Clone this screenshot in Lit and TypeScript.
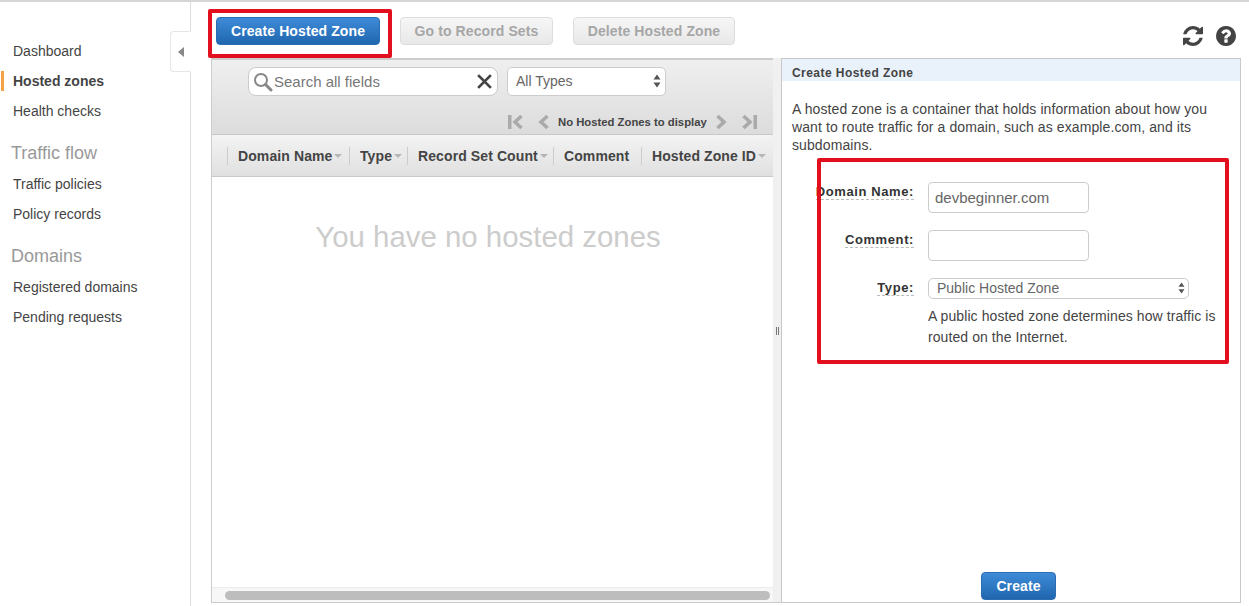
import { LitElement, html, css } from "lit";
import { customElement } from "lit/decorators.js";

const updown = html`<svg class="updown" viewBox="0 0 8 14"><path d="M4 0.500 7.500 5.500H0.500Z M4 13.500 0.500 8.500H7.500Z" fill="#555"/></svg>`;

@customElement("app-root")
export class AppRoot extends LitElement {
  static styles = css`
    :host { display: block; width: 1249px; height: 606px; overflow: hidden; position: relative; background: #fff; color: #444; font-family: "Liberation Sans", Arial, sans-serif; font-size: 14px; }
    * { box-sizing: border-box; }
    .page { display: grid; grid-template-columns: 191px 1fr; height: 606px; border-top: 2px solid #d5d5d5; }
    .side { border-right: 1px solid #ddd; padding-top: 34px; position: relative; }
    .item { height: 30px; line-height: 30px; padding-left: 13px; color: #444; white-space: nowrap; }
    .item.active { font-weight: bold; position: relative; }
    .item.active::before { content: ""; position: absolute; left: 1px; top: 5px; width: 3px; height: 20px; background: #f7a145; }
    .head { height: 28px; line-height: 28px; margin: 13px 0 2px; padding-left: 11px; font-size: 18px; color: #999; }
    .tab { position: absolute; right: -1px; top: 29px; width: 21px; height: 41px; background: #fff; border: 1px solid #e6e6e6; border-right: 1px solid #fff; border-radius: 4px 0 0 4px; display: flex; align-items: center; justify-content: center; }
    .tab i { display: block; width: 0; height: 0; border-style: solid; border-width: 5.500px 6px 5.500px 0; border-color: transparent #888 transparent transparent; margin-left: 1px; }
    .main { display: flex; flex-direction: column; min-width: 0; }
    .bar { height: 56px; flex: none; display: flex; align-items: flex-start; gap: 20px; padding: 15px 13px 0 25px; }
    .btn { height: 28px; border-radius: 4px; font-weight: bold; font-size: 14px; letter-spacing: 0.1px; display: flex; align-items: center; justify-content: center; white-space: nowrap; }
    .btn.primary { color: #fff; background: linear-gradient(#3f8bd8, #1f66ae); border: 1px solid #2a6db3; }
    .btn.off { color: #a6a6a6; background: linear-gradient(#f6f6f6, #e8e8e8); border: 1px solid #ddd; }
    .w1 { width: 164px; } .w2 { width: 153px; } .w3 { width: 162px; }
    .tools { margin-left: auto; display: flex; gap: 13px; padding-top: 9px; }
    .tools svg { width: 20px; height: 20px; display: block; fill: #444; }
    .panes { flex: 1; min-height: 0; display: grid; grid-template-columns: 562px 8px 460px; margin: 0 8px 3px 20px; }
    .left { border: 1px solid #ccc; border-top: 2px solid #ccc; border-right: none; display: flex; flex-direction: column; min-height: 0; }
    .filter { height: 75px; flex: none; background: linear-gradient(#efefef, #dcdcdc); padding: 7px 0 0 36px; border-bottom: 1px solid #c9c9c9; position: relative; }
    .filters { display: flex; gap: 9px; }
    .search { width: 250px; height: 29px; background: #fff; border: 1px solid #ccc; border-radius: 8px; display: flex; align-items: center; padding: 0 4px 0 4px; color: #777; font-size: 15px; }
    .search .lens { width: 20px; height: 20px; margin-right: 1px; flex: none; }
    .search .x { width: 17px; height: 17px; margin-left: auto; flex: none; }
    .search span { white-space: nowrap; }
    .typesel { width: 159px; height: 29px; background: #fff; border: 1px solid #ccc; border-radius: 5px; display: flex; align-items: center; justify-content: space-between; padding: 0 4px 1px 8px; color: #666; font-size: 14px; }
    .updown { width: 8px; height: 14px; display: block; flex: none; }
    .pager { display: flex; align-items: center; height: 16px; margin-top: 18px; margin-left: 260px; position: relative; }
    .pager svg { display: block; flex: none; height: 16px; }
    .pager .chev { fill: none; stroke: #aaa; stroke-width: 3.600; }
    .pager .gap { margin-left: 15px; }
    .pager .t { font-size: 11.300px; font-weight: bold; color: #444; white-space: nowrap; margin: 0 9px; }
    .cols { height: 42px; flex: none; background: linear-gradient(#f3f3f3, #e0e0e0); border-bottom: 1px solid #c9c9c9; display: flex; align-items: center; padding-left: 15px; font-weight: bold; letter-spacing: 0.1px; color: #444; font-size: 14px; white-space: nowrap; }
    .col { height: 18px; line-height: 18px; border-left: 1px solid #ccc; padding-left: 10px; display: flex; align-items: center; }
    .caret { display: block; width: 0; height: 0; margin: 1px 0 0 2px; border-style: solid; border-width: 4px 4px 0 4px; border-color: #b5b5b5 transparent transparent transparent; }
    .c1 { width: 122px; } .c2 { width: 58px; } .c3 { width: 146px; } .c4 { width: 88px; } .c5 { width: 120px; }
    .empty { flex: 1; min-height: 0; text-align: center; color: #ccc; font-size: 29.400px; padding: 43px 9px 0 0; white-space: nowrap; }
    .track { height: 15px; flex: none; background: #f7f7f7; border-top: 1px solid #ececec; padding: 3px 3px 0 13px; }
    .thumb { height: 9px; background: #bdbdbd; border-radius: 5px; }
    .split { background: #f0f0f0; border-bottom: 1px solid #ccc; display: flex; align-items: center; justify-content: center; }
    .split i { display: block; width: 3px; height: 8px; border-left: 1px solid #777; border-right: 1px solid #777; margin-top: 1px; }
    .right { border: 1px solid #c8c8c8; display: flex; flex-direction: column; min-height: 0; }
    .title { height: 22px; padding: 4px 0 0 10px; line-height: 21px; flex: none; background: #e9f1fb; font-size: 12px; font-weight: bold; letter-spacing: 0.450px; color: #444; white-space: nowrap; overflow: hidden; }
    .intro { margin: 0; padding: 19px 10px 0 10px; line-height: 18px; letter-spacing: 0.100px; color: #444; }
    .form { display: grid; grid-template-columns: 132px 1fr; column-gap: 14px; margin-top: 28px; flex: 1; align-content: start; }
    .lab { justify-self: end; height: 16px; line-height: 15px; font-size: 13px; font-weight: bold; letter-spacing: 0.600px; color: #333; border-bottom: 1px dashed #bbb; margin-top: 2px; white-space: nowrap; }
    .inp { width: 161px; height: 31px; border: 1px solid #ccc; border-radius: 4px; padding-left: 6px; line-height: 30px; color: #666; margin-bottom: 17px; font-size: 15px; }
    .sel { width: 261px; height: 21px; border: 1px solid #ccc; border-radius: 5px; padding: 0 3px 1px 8px; color: #666; display: flex; align-items: center; justify-content: space-between; }
    .sel .updown { width: 7px; height: 12px; }
    .help { grid-column: 2; line-height: 21px; margin-top: 7px; letter-spacing: 0.080px; color: #444; }
    .foot { flex: none; display: flex; justify-content: center; padding: 0 0 2px 15px; }
    .btn.go { width: 75px; }
    .mark { position: absolute; border: 4px solid #e2101f; border-radius: 2px; pointer-events: none; }
    .m1 { left: 208px; top: 9px; width: 184px; height: 49px; }
    .m2 { left: 817px; top: 158px; width: 412px; height: 206px; }
  `;

  render() {
    return html`
      <div class="page">
        <nav class="side">
          <div class="item">Dashboard</div>
          <div class="item active">Hosted zones</div>
          <div class="item">Health checks</div>
          <div class="head">Traffic flow</div>
          <div class="item">Traffic policies</div>
          <div class="item">Policy records</div>
          <div class="head">Domains</div>
          <div class="item">Registered domains</div>
          <div class="item">Pending requests</div>
          <div class="tab"><i></i></div>
        </nav>
        <div class="main">
          <div class="bar">
            <div class="btn primary w1">Create Hosted Zone</div>
            <div class="btn off w2">Go to Record Sets</div>
            <div class="btn off w3">Delete Hosted Zone</div>
            <div class="tools">
              <svg viewBox="0 0 1536 1536"><path d="M1511 928q0 5-1 7-64 268-268 434.500t-478 166.500q-146 0-282.500-55t-243.500-157l-129 129q-19 19-45 19t-45-19-19-45v-448q0-26 19-45t45-19h448q26 0 45 19t19 45-19 45l-137 137q71 66 161 102t187 36q134 0 250-65t186-179q11-17 53-117 8-23 30-23h192q13 0 22.500 9.500t9.500 22.500zm25-800v448q0 26-19 45t-45 19h-448q-26 0-45-19t-19-45 19-45l138-138q-148-137-349-137-134 0-250 65t-186 179q-11 17-53 117-8 23-30 23h-199q-13 0-22.500-9.500t-9.500-22.500v-7q65-268 270-434.500t480-166.500q146 0 284 55.500t245 156.500l130-129q19-19 45-19t45 19 19 45z"/></svg>
              <svg viewBox="128 128 1536 1536"><path d="M1024 1376v-192q0-14-9-23t-23-9h-192q-14 0-23 9t-9 23v192q0 14 9 23t23 9h192q14 0 23-9t9-23zm256-672q0-88-55.500-163t-138.500-116-170-41q-243 0-371 213-15 24 8 42l132 100q7 6 19 6 16 0 25-12 53-68 86-92 34-24 86-24 48 0 85.500 26t37.500 59q0 38-20 61t-68 45q-63 28-115.500 86.500t-52.500 125.500v36q0 14 9 23t23 9h192q14 0 23-9t9-23q0-19 21.500-49.500t54.500-49.500q32-18 49-28.500t46-35 44.500-48 28-60.500 12.500-81zm384 192q0 209-103 385.500t-279.500 279.500-385.500 103-385.500-103-279.500-279.500-103-385.500 103-385.500 279.500-279.500 385.500-103 385.500 103 279.500 279.500 103 385.500z"/></svg>
            </div>
          </div>
          <div class="panes">
            <section class="left">
              <div class="filter">
                <div class="filters">
                  <div class="search">
                    <svg class="lens" viewBox="0 0 20 20"><circle cx="8" cy="8" r="6" fill="none" stroke="#888" stroke-width="2"/><path d="M12.500 12.500 18 18" stroke="#888" stroke-width="3" stroke-linecap="round"/></svg>
                    <span>Search all fields</span>
                    <svg class="x" viewBox="0 0 16 16"><path d="M2 2 14 14M14 2 2 14" stroke="#444" stroke-width="2.600"/></svg>
                  </div>
                  <div class="typesel"><span>All Types</span>${updown}</div>
                </div>
                <div class="pager">
                  <svg width="15" viewBox="0 0 15 16"><path d="M0 1h3.500v14H0z" fill="#aaa"/><path class="chev" d="M13.500 2 7 8l6.500 6"/></svg>
                  <svg class="gap" width="11" viewBox="0 0 11 16"><path class="chev" d="M9.500 2 3 8l6.500 6"/></svg>
                  <span class="t">No Hosted Zones to display</span>
                  <svg width="11" viewBox="0 0 11 16"><path class="chev" d="M1.500 2 8 8l-6.500 6"/></svg>
                  <svg class="gap" width="15" viewBox="0 0 15 16"><path d="M15 1h-3.500v14H15z" fill="#aaa"/><path class="chev" d="M1.500 2 8 8l-6.500 6"/></svg>
                </div>
              </div>
              <div class="cols">
                <div class="col c1">Domain Name<i class="caret"></i></div>
                <div class="col c2">Type<i class="caret"></i></div>
                <div class="col c3">Record Set Count<i class="caret"></i></div>
                <div class="col c4">Comment</div>
                <div class="col c5">Hosted Zone ID<i class="caret"></i></div>
              </div>
              <div class="empty">You have no hosted zones</div>
              <div class="track"><div class="thumb"></div></div>
            </section>
            <div class="split"><i></i></div>
            <section class="right">
              <div class="title">Create Hosted Zone</div>
              <p class="intro">A hosted zone is a container that holds information about how you want to route traffic for a domain, such as example.com, and its subdomains.</p>
              <div class="form">
                <div class="lab">Domain Name:</div>
                <div class="inp">devbeginner.com</div>
                <div class="lab">Comment:</div>
                <div class="inp"></div>
                <div class="lab">Type:</div>
                <div class="sel"><span>Public Hosted Zone</span>${updown}</div>
                <div class="help">A public hosted zone determines how traffic is routed on the Internet.</div>
              </div>
              <div class="foot"><div class="btn primary go">Create</div></div>
            </section>
          </div>
        </div>
      </div>
      <div class="mark m1"></div>
      <div class="mark m2"></div>
    `;
  }
}
